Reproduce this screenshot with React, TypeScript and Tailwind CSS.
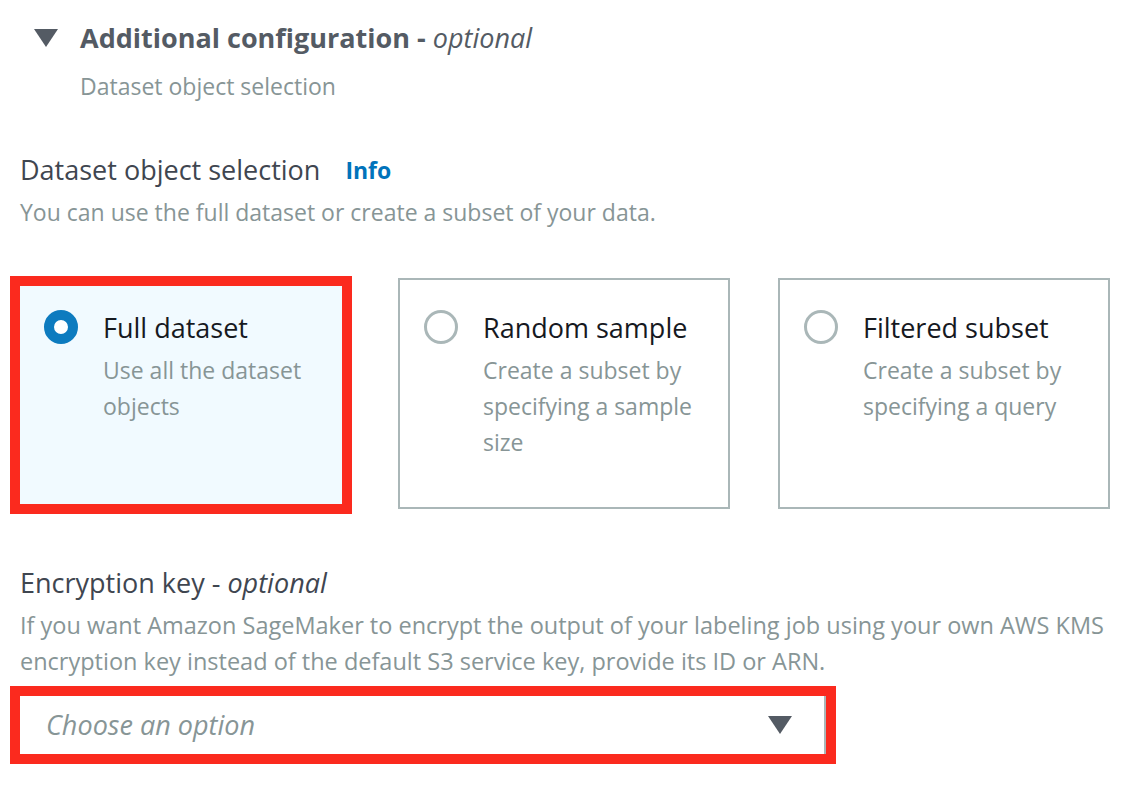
import React from 'react';

const options = [
  {
    title: 'Full dataset',
    description: 'Use all the dataset objects',
    selected: true,
  },
  {
    title: 'Random sample',
    description: 'Create a subset by specifying a sample size',
    selected: false,
  },
  {
    title: 'Filtered subset',
    description: 'Create a subset by specifying a query',
    selected: false,
  },
];

function Radio({ checked }: { checked: boolean }) {
  if (checked) {
    return (
      <span className="w-[34px] h-[34px] shrink-0 rounded-full border-[10px] border-[#0d7bbf] bg-white" />
    );
  }
  return <span className="w-[34px] h-[34px] shrink-0 rounded-full border-[3px] border-[#aab7b8] bg-white" />;
}

function OptionBody({ title, description, checked }: { title: string; description: string; checked: boolean }) {
  return (
    <div className="flex items-start gap-[25px]">
      <div className="h-[36px] flex items-center mt-[-1px]">
        <Radio checked={checked} />
      </div>
      <div className="flex flex-col">
        <span className="text-[27px] leading-[36px] text-[#16191f]">{title}</span>
        <span className="mt-[6px] text-[23px] leading-[36px] text-[#879596]">{description}</span>
      </div>
    </div>
  );
}

export default function App() {
  return (
    <div
      className="w-[1142px] h-[796px] bg-white overflow-hidden"
      style={{ fontFamily: '"Open Sans", "Noto Sans", sans-serif' }}
    >
      {/* expandable section header */}
      <div className="pt-[20px] flex items-center">
        <svg className="ml-[34px] w-[24px] h-[18px]" viewBox="0 0 24 18">
          <path d="M0 0 L24 0 L12 18 Z" fill="#545b64" />
        </svg>
        <h2 className="ml-[22px] text-[27px] leading-[36px] font-bold text-[#545b64]">
          Additional configuration - <span className="italic font-normal">optional</span>
        </h2>
      </div>
      <div className="pl-[80px] mt-[14px] text-[23px] leading-[32px] text-[#879596]">Dataset object selection</div>

      {/* dataset object selection */}
      <div className="pl-[20px] mt-[50px] flex items-center">
        <span className="text-[27px] leading-[36px] text-[#3f4650]">Dataset object selection</span>
        <span className="ml-[25px] text-[23px] leading-[36px] font-bold text-[#0073bb]">Info</span>
      </div>
      <p className="pl-[20px] mt-[8px] text-[23px] leading-[32px] text-[#879596]">
        You can use the full dataset or create a subset of your data.
      </p>

      <div className="mt-[48px] flex items-start">
        <div className="ml-[10px] w-[342px] h-[238px] border-[10px] border-[#fb2a1e] bg-[#f1faff] pl-[24px] pt-[24px] pr-[10px]">
          <OptionBody title={options[0].title} description={options[0].description} checked />
        </div>
        <div className="ml-[46px] mt-[2px] w-[332px] h-[231px] border-2 border-[#aab7b8] pl-[24px] pt-[30px] pr-[20px]">
          <OptionBody title={options[1].title} description={options[1].description} checked={false} />
        </div>
        <div className="ml-[48px] mt-[2px] w-[332px] h-[231px] border-2 border-[#aab7b8] pl-[24px] pt-[30px] pr-[20px]">
          <OptionBody title={options[2].title} description={options[2].description} checked={false} />
        </div>
      </div>

      {/* encryption key */}
      <div className="pl-[20px] mt-[51px] text-[27px] leading-[36px] text-[#3f4650]">
        Encryption key - <span className="italic">optional</span>
      </div>
      <p className="pl-[20px] mt-[6px] w-[1125px] text-[23.5px] leading-[36px] text-[#879596]">
        If you want Amazon SageMaker to encrypt the output of your labeling job using your own AWS KMS encryption key
        instead of the default S3 service key, provide its ID or ARN.
      </p>
      <div className="ml-[10px] mt-[7px] w-[826px] h-[78px] border-[10px] border-[#fb2a1e] bg-white">
        <div className="h-full flex items-center justify-between pl-[26px] pr-[32px] border-r-2 border-[#aab7b8]">
          <span className="italic text-[27px] text-[#879596]">Choose an option</span>
          <svg className="w-[24px] h-[18px]" viewBox="0 0 24 18">
            <path d="M0 0 L24 0 L12 18 Z" fill="#545b64" />
          </svg>
        </div>
      </div>
    </div>
  );
}
